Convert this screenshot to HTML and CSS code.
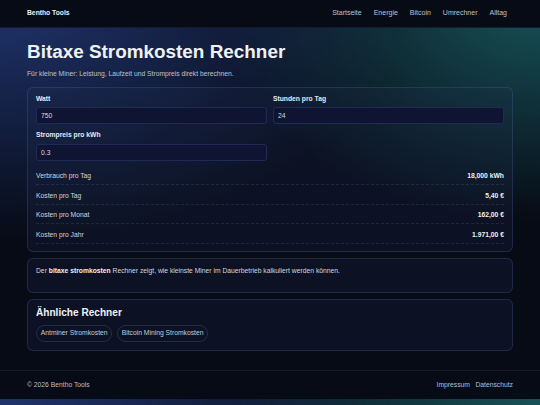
FILE: index.html
```html
<!DOCTYPE html>
<html lang="de">
<head>
  <meta charset="UTF-8">
  <meta name="viewport" content="width=device-width, initial-scale=1.0">
  <title>Bitaxe Stromkosten Rechner</title>
  <link rel="stylesheet" href="styles.css">
</head>
<body>
  <header class="site-header">
    <div class="container header-inner">
      <a class="brand" href="#">Bentho Tools</a>
      <nav class="nav">
        <a href="#">Startseite</a>
        <a href="#">Energie</a>
        <a href="#">Bitcoin</a>
        <a href="#">Umrechner</a>
        <a href="#">Alltag</a>
      </nav>
    </div>
  </header>

  <main class="container main">
    <h1>Bitaxe Stromkosten Rechner</h1>
    <p class="lead">Für kleine Miner: Leistung, Laufzeit und Strompreis direkt berechnen.</p>

    <section class="card calc">
      <div class="form-grid">
        <div class="form-group">
          <label for="watt">Watt</label>
          <input type="text" id="watt" value="750">
        </div>
        <div class="form-group">
          <label for="hours">Stunden pro Tag</label>
          <input type="text" id="hours" value="24">
        </div>
        <div class="form-group">
          <label for="price">Strompreis pro kWh</label>
          <input type="text" id="price" value="0.3">
        </div>
      </div>

      <div class="results">
        <div class="result-row"><span>Verbrauch pro Tag</span><strong id="kwhDay">18,000 kWh</strong></div>
        <div class="result-row"><span>Kosten pro Tag</span><strong id="costDay">5,40 €</strong></div>
        <div class="result-row"><span>Kosten pro Monat</span><strong id="costMonth">162,00 €</strong></div>
        <div class="result-row"><span>Kosten pro Jahr</span><strong id="costYear">1.971,00 €</strong></div>
      </div>
    </section>

    <section class="card info">
      <p>Der <strong>bitaxe stromkosten</strong> Rechner zeigt, wie kleinste Miner im Dauerbetrieb kalkuliert werden können.</p>
    </section>

    <section class="card related">
      <h2>Ähnliche Rechner</h2>
      <div class="chips">
        <a class="chip" href="#">Antminer Stromkosten</a>
        <a class="chip" href="#">Bitcoin Mining Stromkosten</a>
      </div>
    </section>
  </main>

  <footer class="site-footer">
    <div class="container footer-inner">
      <span>© 2026 Bentho Tools</span>
      <nav class="footer-links">
        <a href="#">Impressum</a>
        <a href="#">Datenschutz</a>
      </nav>
    </div>
  </footer>
</body>
</html>
```

FILE: styles.css
```css
html {
  background:
    radial-gradient(ellipse 75% 60% at 0% 0%, rgba(38, 62, 130, 0.8), transparent 100%),
    radial-gradient(ellipse 60% 55% at 100% 0%, rgba(28, 100, 105, 0.8), transparent 100%),
    #070b16;
}
body {
  font-family: 'Liberation Sans', Arial, sans-serif;
  font-size: 6.75px;
  line-height: 1.5;
  color: #d2d6de;
  margin: 0;
}
a {
  color: inherit;
  text-decoration: none;
}
.container {
  width: 486px;
  margin: 0 auto;
}
.site-header {
  background-color: #070b16;
  border-bottom: 1px solid #141b2c;
}
.header-inner {
  height: 27px;
  display: flex;
  align-items: center;
  justify-content: space-between;
}
.brand {
  font-weight: bold;
  color: #eef0f4;
}
.nav {
  display: flex;
  font-size: 7px;
}
.nav a {
  padding: 0 6px;
  color: #bcc1cb;
}
.main {
  padding: 13px 0 19px;
}
h1 {
  font-size: 18.9px;
  line-height: 1.2;
  margin: 0 0 5px;
  color: #eef1f6;
}
.lead {
  margin: 0 0 8px;
  color: #bdc3ce;
}
.card {
  background-color: rgba(30, 44, 80, 0.22);
  border: 1px solid rgba(90, 118, 180, 0.24);
  border-radius: 6px;
  padding: 7px 8px;
  margin-bottom: 6px;
}
.card:last-child {
  margin-bottom: 0;
}
.form-grid {
  display: grid;
  grid-template-columns: 1fr 1fr;
  column-gap: 6px;
  row-gap: 7px;
}
label {
  display: block;
  font-weight: bold;
  line-height: 1.2;
  margin-bottom: 4.5px;
  color: #e6e9ef;
}
input[type="text"] {
  width: 100%;
  height: 17px;
  box-sizing: border-box;
  padding: 0 4px;
  border: 1px solid #1f2b52;
  border-radius: 3px;
  background-color: #0e1432;
  color: #d6dae2;
  font-family: inherit;
  font-size: 6.75px;
}
.results {
  margin-top: 5px;
}
.result-row {
  display: flex;
  justify-content: space-between;
  padding: 5.3px 0 3px;
  border-bottom: 1px dashed rgba(140, 160, 200, 0.14);
}
.result-row strong {
  color: #eef0f4;
}
.info p {
  margin: 0 0 9px;
}
.info strong {
  color: #eef0f4;
}
h2 {
  font-size: 10.1px;
  line-height: 1.2;
  margin: 0 0 6px;
  color: #eef1f6;
}
.chips {
  display: flex;
  gap: 4.5px;
  margin-bottom: 1px;
}
.chip {
  padding: 2.5px 3.8px;
  border: 1px solid rgba(90, 118, 180, 0.28);
  border-radius: 999px;
  color: #c6cbd4;
}
.site-footer {
  background-color: #070b16;
  border-top: 1px solid #141b2c;
}
.footer-inner {
  height: 28px;
  display: flex;
  align-items: center;
  justify-content: space-between;
  color: #b8bec9;
}
.footer-links {
  display: flex;
  gap: 5.5px;
}
```
